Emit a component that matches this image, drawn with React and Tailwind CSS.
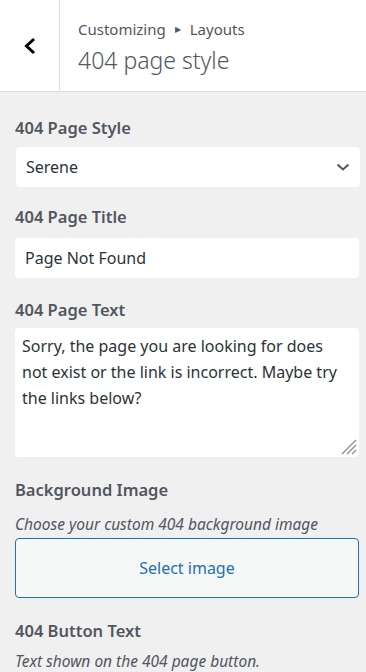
import React from 'react';

const font = { fontFamily: '"Noto Sans", "Open Sans", sans-serif' };

const Label = ({ children }) => (
  <div className="text-[16.5px] font-semibold leading-[24px] text-[#50575e]">{children}</div>
);

const Desc = ({ children }) => (
  <div className="text-[15.5px] italic leading-[20px] text-[#50575e]">{children}</div>
);

const App = () => {
  return (
    <div className="w-[366px] h-[672px] overflow-hidden bg-[#f0f0f1]" style={font}>
      {/* header */}
      <div className="flex h-[92px] bg-white border-b border-[#dcdcde]">
        <button className="w-[60px] shrink-0 flex items-center justify-center border-r border-[#dcdcde]">
          <svg width="16" height="18" viewBox="0 0 16 18">
            <path d="M12 2 L4.5 9 L12 16" fill="none" stroke="#000" strokeWidth="3" />
          </svg>
        </button>
        <div className="flex flex-col pl-[18px] pt-[19px]">
          <div className="flex items-center gap-[9px] text-[15px] leading-[20px] text-[#50575e]">
            <span>Customizing</span>
            <span className="text-[8px] leading-none">▶</span>
            <span>Layouts</span>
          </div>
          <div className="mt-[5px] text-[23px] font-light leading-[32px] text-[#50575e]">404 page style</div>
        </div>
      </div>

      {/* controls */}
      <div className="pl-[15px] pr-[6px] pt-[24px] flex flex-col">
        <Label>404 Page Style</Label>
        <div className="mt-[7px] h-[40px] ml-px bg-white rounded-[4px] flex items-center justify-between pl-[10px] pr-[10px]">
          <span className="text-[16px] text-[#2c3338]">Serene</span>
          <svg width="14" height="10" viewBox="0 0 14 10">
            <path d="M1.5 2.5 L7 7.5 L12.5 2.5" fill="none" stroke="#50575e" strokeWidth="2" />
          </svg>
        </div>

        <div className="mt-[18px]">
          <Label>404 Page Title</Label>
        </div>
        <div className="mt-[9px] h-[40px] mr-px bg-white rounded-[4px] flex items-center pl-[10px]">
          <span className="text-[16px] text-[#2c3338]">Page Not Found</span>
        </div>

        <div className="mt-[20px]">
          <Label>404 Page Text</Label>
        </div>
        <div className="relative mt-[6px] h-[129px] mr-px bg-white rounded-[4px] px-[7px] pt-[5px]">
          <p className="text-[16px] leading-[26px] text-[#2c3338]">
            Sorry, the page you are looking for does not exist or the link is incorrect. Maybe try the links below?
          </p>
          <svg className="absolute right-[2px] bottom-[2px]" width="16" height="16" viewBox="0 0 16 16">
            <path d="M15 1 L1 15 M15 6 L6 15 M15 11 L11 15" stroke="#8c8f94" strokeWidth="1.4" />
          </svg>
        </div>

        <div className="mt-[21px]">
          <Label>Background Image</Label>
        </div>
        <div className="mt-[12px]">
          <Desc>Choose your custom 404 background image</Desc>
        </div>
        <button className="mt-[4px] h-[60px] mr-px border border-[#2271b1] rounded-[4px] bg-[#f6f7f7] text-[16px] text-[#2271b1]">
          Select image
        </button>

        <div className="mt-[21px]">
          <Label>404 Button Text</Label>
        </div>
        <div className="mt-[8px]">
          <Desc>Text shown on the 404 page button.</Desc>
        </div>
      </div>
    </div>
  );
};

export default App;
